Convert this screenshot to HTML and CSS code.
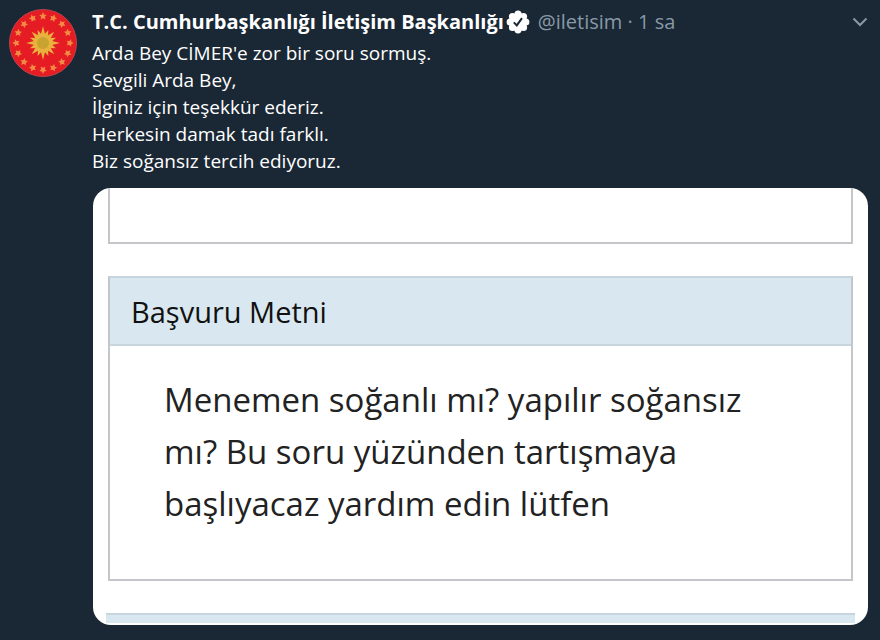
FILE: index.html
```
<!DOCTYPE html>
<html lang="tr">
<head>
    <meta charset="UTF-8">
    <meta name="viewport" content="width=device-width, initial-scale=1">
    <title>T.C. Cumhurbaşkanlığı İletişim Başkanlığı</title>
    <link rel="stylesheet" href="styles.css">
</head>
<body>
    <article class="tweet">
        <svg class="avatar" viewBox="0 0 68 68" aria-hidden="true">
            <defs>
                <path id="star" d="M34 4.600 L34.700 6.200 L36.400 6.400 L35.200 7.600 L35.500 9.300 L34 8.500 L32.500 9.300 L32.800 7.600 L31.600 6.400 L33.300 6.200 Z"/>
                <g id="stars">
                    <use href="#star"/>
                    <use href="#star" transform="rotate(22.500 34 34)"/>
                    <use href="#star" transform="rotate(45 34 34)"/>
                    <use href="#star" transform="rotate(67.500 34 34)"/>
                </g>
                <g id="rays">
                    <path d="M34 17 L36.500 27 L34 34 L31.500 27 Z"/>
                    <path d="M34 20 L36.500 27 L34 34 L31.500 27 Z" transform="rotate(22.500 34 34)"/>
                    <path d="M34 18 L36.500 27 L34 34 L31.500 27 Z" transform="rotate(45 34 34)"/>
                    <path d="M34 20 L36.500 27 L34 34 L31.500 27 Z" transform="rotate(67.500 34 34)"/>
                </g>
            </defs>
            <circle cx="34" cy="34" r="33.500" fill="#e51c23" stroke="#b9444b"/>
            <g fill="#f28b45" stroke="#f28b45" stroke-width="1.200">
                <use href="#stars"/>
                <use href="#stars" transform="rotate(90 34 34)"/>
                <use href="#stars" transform="rotate(180 34 34)"/>
                <use href="#stars" transform="rotate(270 34 34)"/>
            </g>
            <g fill="#e9b23e">
                <use href="#rays"/>
                <use href="#rays" transform="rotate(90 34 34)"/>
                <use href="#rays" transform="rotate(180 34 34)"/>
                <use href="#rays" transform="rotate(270 34 34)"/>
            </g>
            <circle cx="34" cy="34" r="6" fill="#c9a32f"/>
        </svg>

        <div class="content">
            <header class="header">
                <strong class="name">T.C. Cumhurbaşkanlığı İletişim Başkanlığı</strong>
                <svg class="verified" viewBox="0 0 24 24" role="img" aria-label="Onaylanmış hesap">
                    <g fill="#fff">
                        <circle cx="12" cy="12" r="9"/>
                        <circle cx="12" cy="4.200" r="3.600"/>
                        <circle cx="17.500" cy="6.500" r="3.600"/>
                        <circle cx="19.800" cy="12" r="3.600"/>
                        <circle cx="17.500" cy="17.500" r="3.600"/>
                        <circle cx="12" cy="19.800" r="3.600"/>
                        <circle cx="6.500" cy="17.500" r="3.600"/>
                        <circle cx="4.200" cy="12" r="3.600"/>
                        <circle cx="6.500" cy="6.500" r="3.600"/>
                    </g>
                    <path d="M7.800 12.400 L10.800 15.400 L16 8.200" fill="none" stroke="#1a2735" stroke-width="2"/>
                </svg>
                <span class="meta">@iletisim · 1 sa</span>
                <button class="more" type="button" aria-label="Diğer">
                    <svg viewBox="0 0 16 10" aria-hidden="true">
                        <path d="M1.500 1.500 L8 8 L14.500 1.500" fill="none" stroke="#8899a6" stroke-width="2"/>
                    </svg>
                </button>
            </header>

            <p class="text">
                Arda Bey CİMER'e zor bir soru sormuş.<br>
                Sevgili Arda Bey,<br>
                İlginiz için teşekkür ederiz.<br>
                Herkesin damak tadı farklı.<br>
                Biz soğansız tercih ediyoruz.
            </p>

            <div class="media">
                <div class="box-end"></div>
                <section class="box">
                    <h2 class="box-title">Başvuru Metni</h2>
                    <p class="box-text">Menemen soğanlı mı? yapılır soğansız mı? Bu soru yüzünden tartışmaya başlıyacaz yardım edin lütfen</p>
                </section>
                <div class="box-start"></div>
            </div>
        </div>
    </article>
</body>
</html>
```
FILE: styles.css
```
* {
    box-sizing: border-box;
}

body {
    margin: 0;
    background-color: #1a2735;
    color: #fff;
    font-family: "Open Sans", "Noto Sans", sans-serif;
    font-size: 19px;
}

.tweet {
    display: flex;
    gap: 15px;
    padding: 8px 12px 15px 9px;
}

.avatar {
    flex: none;
    width: 68px;
    height: 68px;
    margin-top: 1px;
}

.content {
    flex: 1;
    min-width: 0;
}

.header {
    display: flex;
    align-items: center;
    height: 27px;
    font-size: 20px;
    white-space: nowrap;
}

.name {
    font-weight: 700;
}

.verified {
    flex: none;
    width: 24px;
    height: 24px;
    margin: 0 8px 0 2px;
}

.meta {
    color: #8899a6;
}

.more {
    display: flex;
    margin-left: auto;
    padding: 0;
    border: 0;
    background: none;
    cursor: pointer;
}

.more svg {
    width: 16px;
    height: 10px;
}

.text {
    margin: 5px 0 13px;
    line-height: 27px;
}

.media {
    overflow: hidden;
    margin-left: 1px;
    padding: 0 15px;
    border-radius: 18px;
    background-color: #fff;
    color: #222;
}

/* bottom edge of the previous form section */
.box-end {
    height: 56px;
    margin-bottom: 32px;
    border: 2px solid #c4c6c9;
    border-top: 0;
}

.box {
    border: 2px solid #c4c6c9;
    border-top-color: #c6d5de;
}

.box-title {
    margin: 0;
    padding: 16px 21px 14px;
    border-bottom: 2px solid #c6d5de;
    background-color: #d9e8f0;
    color: #111;
    font-size: 29px;
    font-weight: 400;
    line-height: 36px;
}

.box-text {
    margin: 0;
    padding: 28px 54px 49px;
    font-size: 33px;
    line-height: 52px;
}

/* top edge of the next form section */
.box-start {
    height: 10px;
    margin: 32px -2px 2px;
    border-top: 2px solid #c6d5de;
    background-color: #d9e8f0;
}
```
